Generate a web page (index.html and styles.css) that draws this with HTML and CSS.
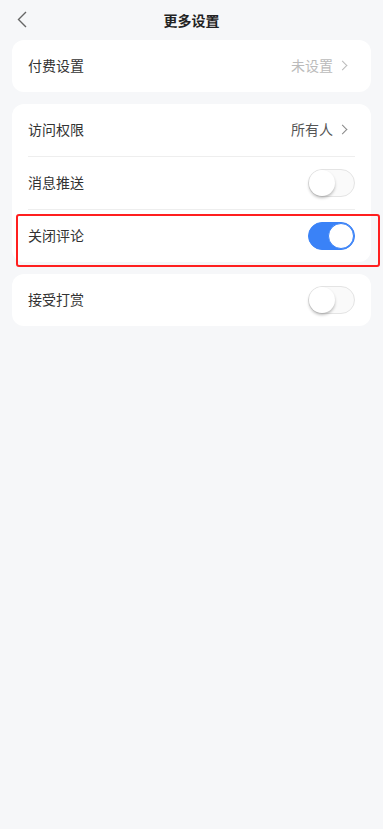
FILE: index.html
```html
<!DOCTYPE html>
<html lang="zh-CN">
<head>
	<meta charset="UTF-8">
	<title>更多设置</title>
	<meta name="viewport" content="width=device-width,initial-scale=1">
	<link rel="stylesheet" href="styles.css">
</head>
<body>
	<div class="top">
		<span class="back">
			<svg width="10" height="17" viewBox="0 0 10 17"><path d="M9 1L1.5 8.5L9 16" fill="none" stroke="#666" stroke-width="1.4"/></svg>
		</span>
		<div class="title">更多设置</div>
	</div>
	<div class="card">
		<div class="item">
			<span class="label">付费设置</span>
			<span class="value light">未设置<i class="arrow"></i></span>
		</div>
	</div>
	<div class="card">
		<div class="item line">
			<span class="label">访问权限</span>
			<span class="value">所有人<i class="arrow"></i></span>
		</div>
		<div class="item line">
			<span class="label">消息推送</span>
			<span class="switch"></span>
		</div>
		<div class="item mark">
			<span class="label">关闭评论</span>
			<span class="switch on"></span>
		</div>
	</div>
	<div class="card">
		<div class="item">
			<span class="label">接受打赏</span>
			<span class="switch"></span>
		</div>
	</div>
</body>
</html>
```
FILE: styles.css
```css
body,div,p,span{margin:0;padding:0}
html,body{width:100%;height:100%}
body{background:#f6f7f9;font-family:"Noto Sans CJK SC","Noto Sans",sans-serif;color:#333;font-size:14px}
.top{height:40px;position:relative;display:flex;align-items:center;justify-content:center}
.back{position:absolute;left:17px;top:11px;width:10px;height:17px}
.back svg{display:block}
.title{font-size:14px;font-weight:bold;color:#222;line-height:40px}
.card{margin:0 12px 12px;background:#fff;border-radius:12px;padding:0 16px}
.item{height:52px;display:flex;align-items:center;justify-content:space-between;position:relative}
.item.line{border-bottom:1px solid #eeeeee}
.label{font-size:14px;color:#333;margin-top:-2px}
.value{font-size:14px;color:#555;display:flex;align-items:center;margin-top:-2px}
.value.light{color:#bbb}
.arrow{display:inline-block;width:6px;height:6px;border-top:1.3px solid #888;border-right:1.3px solid #888;transform:rotate(45deg);margin:0 9px 0 6px}
.light .arrow{border-color:#bbb}
.switch{width:47px;height:28px;border-radius:14px;border:1px solid #e4e4e4;background:#fafafa;box-sizing:border-box;position:relative}
.switch:after{content:"";position:absolute;left:0;top:0;width:26px;height:26px;border-radius:50%;background:#fff;box-shadow:0 2px 3px rgba(0,0,0,.25);box-sizing:border-box}
.switch.on{background:#3a82f7;border-color:#3a82f7}
.switch.on:after{left:auto;right:0;box-shadow:none;border:1px solid #3a82f7}
.mark:after{content:"";position:absolute;left:-12px;right:-25px;top:4px;bottom:-5px;border:2.5px solid #ff1f1f;border-radius:3px}
```
